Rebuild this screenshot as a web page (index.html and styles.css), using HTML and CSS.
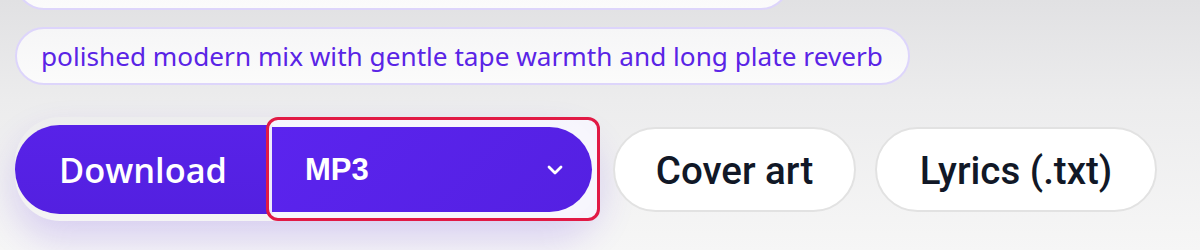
FILE: index.html
```html
<!DOCTYPE html>
<html lang="en">
<head>
<meta charset="utf-8">
<title>Export</title>
<link rel="stylesheet" href="styles.css">
</head>
<body>
<div class="wrap">
  <div class="chip chip-top"></div>
  <div class="chip chip-prompt">polished modern mix with gentle tape warmth and long plate reverb</div>
  <div class="actions">
    <div class="split">
      <button class="dl">Download</button>
      <div class="ring">
        <div class="select">
          <span class="fmt">MP3</span>
          <svg class="chev" width="16" height="10" viewBox="0 0 16 10" aria-hidden="true"><path d="M2 2 L8 8 L14 2" fill="none" stroke="#fff" stroke-width="2.8" stroke-linecap="round" stroke-linejoin="round"/></svg>
        </div>
      </div>
    </div>
    <button class="pill pill-cover">Cover art</button>
    <button class="pill pill-lyrics">Lyrics (.txt)</button>
  </div>
</div>
</body>
</html>
```
FILE: styles.css
```css
* { box-sizing: border-box; }
html, body { margin: 0; height: 100%; }
body {
  background: linear-gradient(180deg, #e1e1e3 0%, #ececed 40%, #f6f6f6 100%);
  overflow: hidden;
}
.wrap {
  padding-left: 15px;
  display: flex;
  flex-direction: column;
  align-items: flex-start;
}
.chip {
  height: 58px;
  border: 2px solid #ddd5fb;
  border-radius: 29px;
  background: linear-gradient(180deg, #f6f6f7 0%, #fbfbfb 100%);
}
.chip-top {
  width: 775px;
  margin-top: -48px;
}
.chip-prompt {
  margin-top: 17px;
  width: 895px;
  display: flex;
  align-items: center;
  padding: 0 24px;
  font-family: "Noto Sans", sans-serif;
  font-size: 26.2px;
  color: #5a24e6;
  white-space: nowrap;
}
.actions {
  margin-top: 32px;
  display: flex;
  align-items: center;
}
.split {
  display: flex;
  align-items: center;
  border-radius: 45px;
  box-shadow: 0 18px 36px rgba(90, 40, 230, 0.18);
}
.dl {
  width: 258px;
  height: 89px;
  border: 0;
  border-radius: 45px 0 0 45px;
  background: linear-gradient(180deg, #5822e8 0%, #5320e0 100%);
  color: #fff;
  font-family: "Open Sans", sans-serif;
  font-weight: 600;
  font-size: 34.4px;
  text-align: left;
  padding: 0 0 0 44px;
}
.ring {
  margin-left: -7px;
  border: 3px solid #e11a45;
  border-radius: 12px;
  padding: 7px 5px 6px 3px;
  background: rgba(247, 245, 253, 0.95);
  position: relative;
}
.select {
  width: 320px;
  height: 85px;
  border-radius: 0 43px 43px 0;
  background: linear-gradient(135deg, #5b24ee 0%, #5420e2 100%);
  display: flex;
  align-items: center;
  justify-content: space-between;
  padding: 0 29px 0 33px;
}
.fmt {
  font-family: "Liberation Sans", Arial, sans-serif;
  font-weight: 700;
  font-size: 31px;
  color: #fff;
}
.chev { display: block; }
.pill {
  height: 85px;
  border: 2px solid #e2e2e2;
  border-radius: 43px;
  background: #fff;
  color: #111827;
  font-family: Roboto, sans-serif;
  font-weight: 500;
  font-size: 38.5px;
  padding: 3px 0 0;
}
.pill-cover { margin-left: 13px; width: 243px; }
.pill-lyrics { margin-left: 19px; width: 282px; }
```
